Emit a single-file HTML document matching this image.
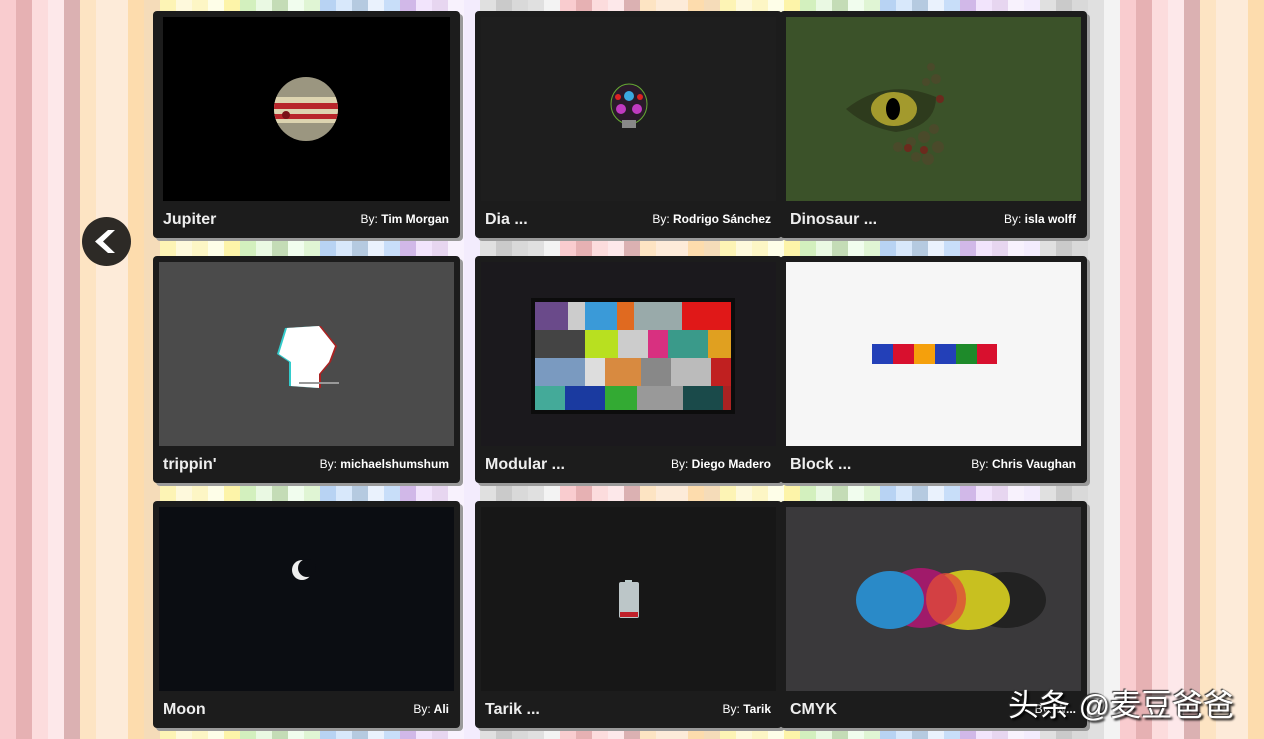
<!DOCTYPE html>
<html><head><meta charset="utf-8"><style>
*{margin:0;padding:0;box-sizing:border-box}
body{width:1264px;height:739px;overflow:hidden;position:relative;font-family:"Liberation Sans",Arial,sans-serif;
background-image:linear-gradient(90deg,#f9cccf 0 16px,#e6b1b3 16px 32px,#fcdcdd 32px 48px,#fde8ea 48px 64px,#dbb1b2 64px 80px,#fde4c3 80px 96px,#fdebd9 96px 128px,#fddcad 128px 144px,#f5dcb9 144px 160px,#fdf4b5 160px 176px,#fef9dc 176px 192px,#fdf6c5 192px 208px,#fefee8 208px 224px,#fdf4a9 224px 240px,#d3f0be 240px 256px,#eaf9e3 256px 272px,#c4dcb6 272px 288px,#f1fdee 288px 304px,#e0f5d4 304px 320px,#b8d3f3 320px 336px,#d8e8fb 336px 352px,#b5cae0 352px 368px,#eaf2fd 368px 384px,#c8def9 384px 400px,#d1b8e8 400px 416px,#f2e4fc 416px 432px,#e7d6f0 432px 448px,#f8f2fd 448px 464px,#f3ecfd 464px 480px,#e0e0e0 480px 496px,#cacaca 496px 512px,#d9d9d9 512px 528px,#e0e0e0 528px 544px,#f3f3f3 544px 560px);
background-size:560px 100%;background-repeat:repeat-x}
.card{position:absolute;width:307px;height:227px;background:#1c1c1c;border-radius:4px;box-shadow:3px 3px 0 #9a9a9a}
.img{position:absolute;left:6px;top:6px;width:295px;height:184px;overflow:hidden}
.t{position:absolute;left:10px;top:200px;color:#eee;font-weight:bold;font-size:16px}
.a{position:absolute;right:11px;top:201px;color:#fff;font-size:12px;font-weight:bold}
.a span{font-weight:normal}
.back{position:absolute;left:82px;top:217px;width:49px;height:49px;border-radius:50%;background:#2d2a26}
.wm{position:absolute;left:1008px;top:680px;font-family:"Liberation Sans","Noto Sans CJK SC",sans-serif;font-size:31px;color:#fff;text-shadow:2px 2px 2px #000,-1px -1px 1px #333}
</style></head><body>
<div class="back"><svg width="49" height="49" viewBox="0 0 49 49"><path d="M26 13 L13 24.5 L26 36 L33 36 L21 24.5 L33 13 Z" fill="#fff"/></svg></div>

<div class="card" style="left:153px;top:11px"><div class="img" style="background:#000;left:10px;width:287px">
<svg width="287" height="184"><defs><clipPath id="c"><circle cx="143" cy="92" r="32"/></clipPath></defs><g clip-path="url(#c)"><rect x="100" y="50" width="90" height="90" fill="#9b9680"/><rect x="100" y="80" width="90" height="26" fill="#ddd4b0"/><rect x="100" y="86" width="90" height="6" fill="#b8262b"/><rect x="100" y="97" width="90" height="5" fill="#b8262b"/></g><circle cx="123" cy="98" r="4" fill="#7a1218"/></svg></div>
<div class="t">Jupiter</div><div class="a"><span>By:</span> Tim Morgan</div></div>

<div class="card" style="left:475px;top:11px"><div class="img" style="background:#1e1e1e">
<svg width="295" height="184"><ellipse cx="148" cy="87" rx="18" ry="20" fill="#2a1a2a" stroke="#6a3" stroke-width="1"/><circle cx="148" cy="79" r="5" fill="#3aa9e0"/><circle cx="140" cy="92" r="5" fill="#c03ac0"/><circle cx="156" cy="92" r="5" fill="#c03ac0"/><circle cx="137" cy="80" r="3" fill="#d22"/><circle cx="159" cy="80" r="3" fill="#d22"/><rect x="141" y="103" width="14" height="8" fill="#888"/></svg></div>
<div class="t">Dia ...</div><div class="a"><span>By:</span> Rodrigo Sánchez</div></div>

<div class="card" style="left:780px;top:11px"><div class="img" style="background:#3b5229">
<svg width="295" height="184"><path d="M60 92 Q100 60 150 80 Q150 110 110 115 Q80 110 60 92Z" fill="#2e3b1d"/><ellipse cx="108" cy="92" rx="23" ry="17" fill="#a39a2d"/><ellipse cx="107" cy="92" rx="7" ry="11" fill="#000"/><g fill="#4a4a2a"><circle cx="145" cy="50" r="4"/><circle cx="150" cy="62" r="5"/><circle cx="140" cy="65" r="4"/><circle cx="138" cy="120" r="6"/><circle cx="152" cy="130" r="6"/><circle cx="125" cy="125" r="5"/><circle cx="142" cy="142" r="6"/><circle cx="112" cy="130" r="5"/><circle cx="148" cy="112" r="5"/><circle cx="130" cy="140" r="5"/></g><g fill="#6b2a1d"><circle cx="154" cy="82" r="4"/><circle cx="122" cy="131" r="4"/><circle cx="138" cy="133" r="4"/></g></svg></div>
<div class="t">Dinosaur ...</div><div class="a"><span>By:</span> isla wolff</div></div>

<div class="card" style="left:153px;top:256px"><div class="img" style="background:#4b4b4b">
<svg width="295" height="184"><g transform="translate(-2,0)"><path d="M128 66 L160 64 L176 84 L170 100 L160 112 L160 126 L132 124 L132 100 L120 92 Z" fill="#3cc"/></g><g transform="translate(2,0)"><path d="M128 66 L160 64 L176 84 L170 100 L160 112 L160 126 L132 124 L132 100 L120 92 Z" fill="#a22"/></g><path d="M128 66 L160 64 L176 84 L170 100 L160 112 L160 126 L132 124 L132 100 L120 92 Z" fill="#fff"/><rect x="140" y="120" width="40" height="2" fill="#999"/></svg></div>
<div class="t">trippin'</div><div class="a"><span>By:</span> michaelshumshum</div></div>

<div class="card" style="left:475px;top:256px"><div class="img" style="background:#1b191d">
<svg width="295" height="184"><rect x="50" y="36" width="204" height="116" fill="#0c0c0c"/>
<rect x="54" y="40" width="33" height="28" fill="#6a4a8a"/><rect x="87" y="40" width="17" height="28" fill="#ccc"/><rect x="104" y="40" width="32" height="28" fill="#3a9ad8"/><rect x="136" y="40" width="17" height="28" fill="#e06a20"/><rect x="153" y="40" width="48" height="28" fill="#9aa"/><rect x="201" y="40" width="49" height="28" fill="#e01818"/>
<rect x="54" y="68" width="50" height="28" fill="#444"/><rect x="104" y="68" width="33" height="28" fill="#b8e020"/><rect x="137" y="68" width="30" height="28" fill="#ccc"/><rect x="167" y="68" width="20" height="28" fill="#d83080"/><rect x="187" y="68" width="40" height="28" fill="#3a9a8a"/><rect x="227" y="68" width="23" height="28" fill="#e0a020"/>
<rect x="54" y="96" width="50" height="28" fill="#7a9ac0"/><rect x="104" y="96" width="20" height="28" fill="#ddd"/><rect x="124" y="96" width="36" height="28" fill="#d88a40"/><rect x="160" y="96" width="30" height="28" fill="#888"/><rect x="190" y="96" width="40" height="28" fill="#bbb"/><rect x="230" y="96" width="20" height="28" fill="#c02020"/>
<rect x="54" y="124" width="30" height="24" fill="#4a9"/><rect x="84" y="124" width="40" height="24" fill="#1a3aa0"/><rect x="124" y="124" width="32" height="24" fill="#3a3"/><rect x="156" y="124" width="46" height="24" fill="#999"/><rect x="202" y="124" width="40" height="24" fill="#1a4a4a"/><rect x="242" y="124" width="8" height="24" fill="#a22"/></svg></div>
<div class="t">Modular ...</div><div class="a"><span>By:</span> Diego Madero</div></div>

<div class="card" style="left:780px;top:256px"><div class="img" style="background:#f6f6f6">
<svg width="295" height="184"><rect x="86" y="82" width="21" height="20" fill="#2340b8"/><rect x="107" y="82" width="21" height="20" fill="#d8102e"/><rect x="128" y="82" width="21" height="20" fill="#f5a00c"/><rect x="149" y="82" width="21" height="20" fill="#2340b8"/><rect x="170" y="82" width="21" height="20" fill="#1e8a2a"/><rect x="191" y="82" width="20" height="20" fill="#d8102e"/></svg></div>
<div class="t">Block ...</div><div class="a"><span>By:</span> Chris Vaughan</div></div>

<div class="card" style="left:153px;top:501px"><div class="img" style="background:#0b0d12">
<svg width="295" height="184"><circle cx="143" cy="63" r="10" fill="#eee"/><circle cx="148" cy="61" r="9" fill="#0b0d12"/></svg></div>
<div class="t">Moon</div><div class="a"><span>By:</span> Ali</div></div>

<div class="card" style="left:475px;top:501px"><div class="img" style="background:#171717">
<svg width="295" height="184"><rect x="144" y="73" width="7" height="3" fill="#bcc"/><rect x="138" y="75" width="20" height="36" rx="2" fill="#bcc6c8"/><rect x="139" y="105" width="18" height="5" fill="#c0202a"/></svg></div>
<div class="t">Tarik ...</div><div class="a"><span>By:</span> Tarik</div></div>

<div class="card" style="left:780px;top:501px"><div class="img" style="background:#3a393b">
<svg width="295" height="184"><ellipse cx="220" cy="93" rx="40" ry="28" fill="#222"/><ellipse cx="182" cy="93" rx="42" ry="30" fill="#c8c020"/><ellipse cx="135" cy="91" rx="36" ry="30" fill="#a01a6a"/><ellipse cx="104" cy="93" rx="34" ry="29" fill="#2a8ac8"/><ellipse cx="160" cy="92" rx="20" ry="26" fill="#e04a3a" opacity=".8"/></svg></div>
<div class="t">CMYK</div><div class="a"><span>By:</span> W...</div></div>

<div class="wm">头条 @麦豆爸爸</div>
</body></html>
